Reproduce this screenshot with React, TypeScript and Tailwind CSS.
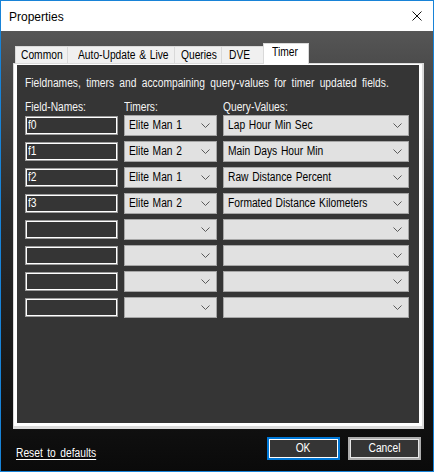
import React from "react";

const rows: [string, string, string][] = [
  ["f0", "Elite Man 1", "Lap Hour Min Sec"],
  ["f1", "Elite Man 2", "Main Days Hour Min"],
  ["f2", "Elite Man 1", "Raw Distance Percent"],
  ["f3", "Elite Man 2", "Formated Distance Kilometers"],
  ["", "", ""],
  ["", "", ""],
  ["", "", ""],
  ["", "", ""],
];

function N({ children, center }: { children: React.ReactNode; center?: boolean }) {
  return (
    <span className={`inline-block whitespace-nowrap scale-x-[0.82] [word-spacing:1px] ${center ? "origin-center" : "origin-left"}`}>
      {children}
    </span>
  );
}

function Chevron() {
  return (
    <svg width="9" height="6" viewBox="0 0 9 6" className="shrink-0">
      <path d="M0.5 0.5 L4.5 4.5 L8.5 0.5" fill="none" stroke="#5a5a5a" strokeWidth="1" />
    </svg>
  );
}

function Combo({ text, w }: { text: string; w: string }) {
  return (
    <div className={`${w} h-[21px] bg-[#e1e1e1] border border-[#a6a6a6] flex items-center pl-[4px] pr-[6px]`}>
      <span className="flex-1 min-w-0 text-[12.5px] leading-none text-black whitespace-nowrap">
        {text ? <N>{text}</N> : null}
      </span>
      <Chevron />
    </div>
  );
}

export default function App() {
  return (
    <div className="w-[434px] h-[472px] border border-[#1883d7] flex flex-col font-['Liberation_Sans',Arial,sans-serif] overflow-hidden">
      <div className="h-[30px] bg-white flex items-center pl-[8px] pr-[10px] shrink-0">
        <span className="flex-1 text-[12px] text-black mt-[1px]">Properties</span>
        <svg width="10" height="10" viewBox="0 0 10 10" className="mr-[1px]">
          <path d="M0.5 0.5 L9.5 9.5 M9.5 0.5 L0.5 9.5" stroke="#111" strokeWidth="1" />
        </svg>
      </div>
      <div className="flex-1 flex flex-col pl-[12px] pr-[10px] bg-[linear-gradient(to_bottom,#565656_0%,#484848_10%,#2c2c2c_40%,#1c1c1c_70%,#0a0a0a_100%)]">
        <div className="mt-[12px] h-[20px] flex items-end pl-[2px] text-[12.5px] text-black">
          <div className="w-[53px] h-[17px] bg-[#f0f0f0] border border-b-0 border-[#d9d9d9] pl-[5px] leading-[16px]"><N>Common</N></div>
          <div className="w-[107px] h-[17px] bg-[#f0f0f0] border border-b-0 border-l-0 border-[#d9d9d9] pl-[10px] leading-[16px]"><N>Auto-Update &amp; Live</N></div>
          <div className="w-[47px] h-[17px] bg-[#f0f0f0] border border-b-0 border-l-0 border-[#d9d9d9] pl-[6px] leading-[16px]"><N>Queries</N></div>
          <div className="w-[42px] h-[17px] bg-[#f0f0f0] border border-b-0 border-l-0 border-[#d9d9d9] pl-[7px] leading-[16px]"><N>DVE</N></div>
          <div className="w-[46px] h-[21px] -mb-[1px] bg-white border border-b-0 border-[#d9d9d9] pl-[8px] leading-[17px] -ml-[1px] relative"><N>Timer</N></div>
        </div>
        <div className="w-[411px] h-[366px] border-t border-l border-r-2 border-b-[3px] border-[#dadada]">
          <div className="w-full h-full border-t border-l-[3px] border-r-[3px] border-b-[3px] border-white bg-[#353535] flex flex-col pl-[8px]">
            <div className="mt-[10px] text-[12.5px] leading-[16px] text-[#f4f4f4] whitespace-nowrap">
              <span className="inline-block whitespace-nowrap scale-x-[0.82] origin-left [word-spacing:3px]">
                Fieldnames, timers and accompaining query-values for timer updated fields.
              </span>
            </div>
            <div className="mt-[8px] flex text-[12.5px] leading-[16px] text-[#f4f4f4]">
              <div className="w-[99px]"><N>Field-Names:</N></div>
              <div className="w-[99px]"><N>Timers:</N></div>
              <div><N>Query-Values:</N></div>
            </div>
            <div className="flex flex-col gap-[5px]">
              {rows.map((r, i) => (
                <div key={i} className="flex items-center gap-[6px]">
                  <div className="w-[93px] h-[19px] border border-[#9c9c9c]">
                    <div className="w-full h-full border border-white bg-[#353535] flex items-center pl-[1px]">
                      <span className="text-[12.5px] leading-none text-white">{r[0] ? <N>{r[0]}</N> : null}</span>
                    </div>
                  </div>
                  <Combo text={r[1]} w="w-[93px]" />
                  <Combo text={r[2]} w="w-[186px]" />
                </div>
              ))}
            </div>
          </div>
        </div>
        <div className="mt-[8px] flex items-start">
          <div className="pl-[3px] pt-[3px] flex-1">
            <span className="inline-block text-[12.5px] leading-[16px] text-white underline underline-offset-2 scale-x-[0.82] origin-left [word-spacing:2px]">Reset to defaults</span>
          </div>
          <button className="w-[73px] h-[23px] border-2 border-[#0078d7] bg-[#353535] p-0">
            <div className="w-full h-full border border-white flex items-center justify-center text-[12.5px] text-white"><N center>OK</N></div>
          </button>
          <button className="ml-[8px] w-[73px] h-[23px] border-2 border-[#adadad] bg-[#353535] p-0 mr-[2px]">
            <div className="w-full h-full border border-[#e6e6e6] flex items-center justify-center text-[12.5px] text-white"><N center>Cancel</N></div>
          </button>
        </div>
      </div>
    </div>
  );
}
